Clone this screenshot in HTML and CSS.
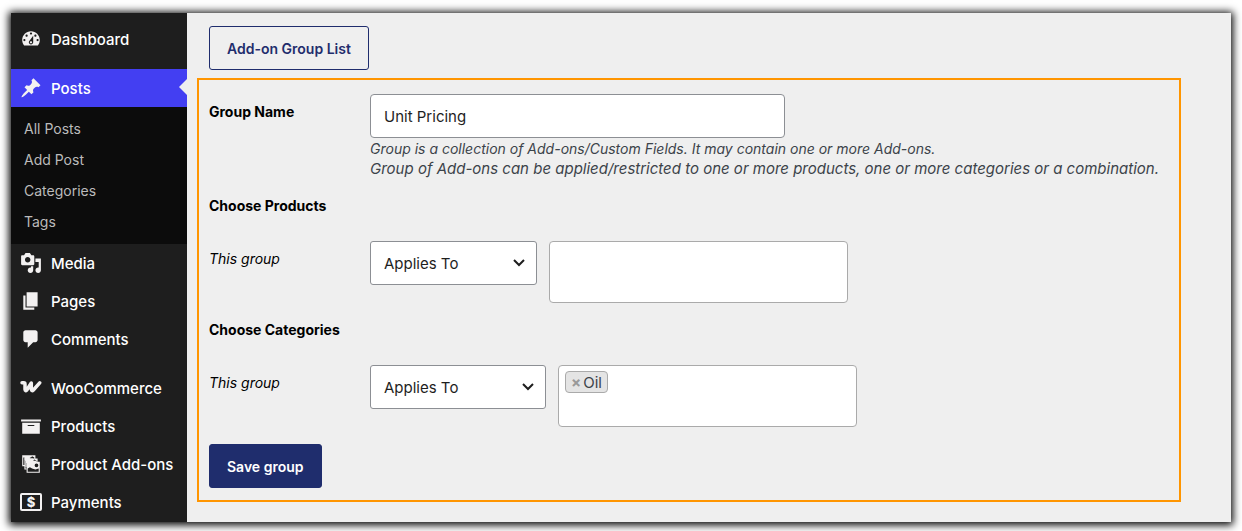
FILE: index.html
```html
<!DOCTYPE html>
<html lang="en">
<head>
  <meta charset="UTF-8">
  <meta name="viewport" content="width=device-width, initial-scale=1">
  <title>Edit Add-on Group</title>
  <link rel="stylesheet" href="styles.css">
</head>
<body>
<div class="admin">
  <nav class="sidebar">
    <ul class="menu">
      <li>
        <a href="#" class="menu-link">
          <svg class="icon" viewBox="0 0 20 20"><path d="M3.76 16h12.48c1.1-1.37 1.76-3.11 1.76-5 0-4.42-3.58-8-8-8s-8 3.58-8 8c0 1.89.66 3.63 1.76 5zM10 4c.55 0 1 .45 1 1s-.45 1-1 1-1-.45-1-1 .45-1 1-1zM6 6c.55 0 1 .45 1 1s-.45 1-1 1-1-.45-1-1 .45-1 1-1zm8 0c.55 0 1 .45 1 1s-.45 1-1 1-1-.45-1-1 .45-1 1-1zm-5.37 5.55L12 7v6c0 1.1-.9 2-2 2s-2-.9-2-2c0-.57.24-1.08.63-1.45zM4 10c.55 0 1 .45 1 1s-.45 1-1 1-1-.45-1-1 .45-1 1-1zm12 0c.55 0 1 .45 1 1s-.45 1-1 1-1-.45-1-1 .45-1 1-1zm-5 3c0-.55-.45-1-1-1s-1 .45-1 1 .45 1 1 1 1-.45 1-1z"/></svg>
          Dashboard
        </a>
      </li>
      <li class="separator"></li>
      <li>
        <a href="#" class="menu-link current">
          <svg class="icon" viewBox="0 0 20 20"><path d="M10.44 3.02l1.82-1.82 6.36 6.35-1.83 1.82c-1.05-.68-2.48-.57-3.41.36l-.75.75c-.92.93-1.04 2.35-.35 3.41l-1.83 1.82-2.41-2.41-2.8 2.79c-.42.42-3.38 2.71-3.8 2.29s1.86-3.39 2.28-3.81l2.79-2.79L4.1 9.36l1.83-1.82c1.05.69 2.48.57 3.4-.36l.75-.75c.93-.92 1.05-2.35.36-3.41z"/></svg>
          Posts
        </a>
        <ul class="submenu">
          <li><a href="#">All Posts</a></li>
          <li><a href="#">Add Post</a></li>
          <li><a href="#">Categories</a></li>
          <li><a href="#">Tags</a></li>
        </ul>
      </li>
      <li>
        <a href="#" class="menu-link">
          <svg class="icon" viewBox="0 0 20 20"><path d="M13 11V4c0-.55-.45-1-1-1h-1.67L9 1H5L3.67 3H2c-.55 0-1 .45-1 1v7c0 .55.45 1 1 1h10c.55 0 1-.45 1-1zM7 4.5c1.38 0 2.5 1.12 2.5 2.5S8.38 9.5 7 9.5 4.5 8.38 4.5 7 5.62 4.5 7 4.5zM14 6h5v10.5c0 1.38-1.12 2.5-2.5 2.5S14 17.88 14 16.5s1.12-2.5 2.5-2.5c.17 0 .34.02.5.05V9h-3V6zm-4 8.05V13h2v3.5c0 1.38-1.12 2.5-2.5 2.5S7 17.88 7 16.5 8.12 14 9.5 14c.17 0 .34.02.5.05z"/></svg>
          Media
        </a>
      </li>
      <li>
        <a href="#" class="menu-link">
          <svg class="icon" viewBox="0 0 20 20"><path d="M6 15V2h10v13H6zm-1 1h8v2H3V5h2v11z"/></svg>
          Pages
        </a>
      </li>
      <li>
        <a href="#" class="menu-link">
          <svg class="icon" viewBox="0 0 20 20"><path d="M5 2h9c1.1 0 2 .9 2 2v7c0 1.1-.9 2-2 2h-2l-5 5v-5H5c-1.1 0-2-.9-2-2V4c0-1.1.9-2 2-2z"/></svg>
          Comments
        </a>
      </li>
      <li class="separator"></li>
      <li>
        <a href="#" class="menu-link">
          <svg class="icon" viewBox="0 0 22 22"><path class="woo" d="M2 5.700H3.700Q5 5.700 5 7.200V12.400Q5.200 14.700 6.800 13L11.300 6V12.400Q11.800 14.600 13.400 13L19.700 5.900"/></svg>
          WooCommerce
        </a>
      </li>
      <li>
        <a href="#" class="menu-link">
          <svg class="icon" viewBox="0 0 20 20"><path d="M19 4v2H1V4h18zM2 7h16v10H2V7zm11 3V9H7v1h6z"/></svg>
          Products
        </a>
      </li>
      <li>
        <a href="#" class="menu-link">
          <svg class="icon" viewBox="0 0 20 20">
            <path d="M2 2h12v3h-1V4l-2-1-1 1H3v7h1v1H2V2zM4 5h12v3h-1V7l-2-1-1 1H5v7h1v1H4V5z"/>
            <path d="M4 3h5v2h3v2h3v2H6v4H5V6H4V3z"/>
            <path fill-rule="evenodd" d="M6 8h12v10H6V8zm1 6v3h10v-3l-3 1-3-1-2-1-2 1zm8-4.500a1.700 1.700 0 1 0 0 3.400 1.700 1.700 0 0 0 0-3.400z"/>
          </svg>
          Product Add-ons
        </a>
      </li>
      <li>
        <a href="#" class="menu-link">
          <svg class="icon" viewBox="0 0 22 22"><rect class="bill" x="1" y="3" width="20" height="16" rx="1"/><text class="bill-sign" x="11" y="16">$</text></svg>
          Payments
        </a>
      </li>
    </ul>
  </nav>

  <main class="content">
    <a href="#" class="btn btn-outline">Add-on Group List</a>

    <form class="group-form">
      <div class="row">
        <label class="row-title" for="group-name">Group Name</label>
        <div class="field">
          <input type="text" id="group-name" class="text-input" value="Unit Pricing">
          <p class="hint">Group is a collection of Add-ons/Custom Fields. It may contain one or more Add-ons.</p>
          <p class="hint hint-large">Group of Add-ons can be applied/restricted to one or more products, one or more categories or a combination.</p>
        </div>
      </div>

      <h2 class="section-title">Choose Products</h2>
      <div class="row">
        <label class="row-label" for="products-rule">This group</label>
        <div class="field field-inline">
          <select id="products-rule" class="select">
            <option>Applies To</option>
            <option>Excludes</option>
          </select>
          <div class="tag-box">
            <input type="text" class="tag-input" aria-label="Products">
          </div>
        </div>
      </div>

      <h2 class="section-title">Choose Categories</h2>
      <div class="row">
        <label class="row-label" for="categories-rule">This group</label>
        <div class="field field-inline">
          <select id="categories-rule" class="select select-wide">
            <option>Applies To</option>
            <option>Excludes</option>
          </select>
          <div class="tag-box">
            <span class="tag"><button type="button" class="tag-remove" aria-label="Remove Oil">×</button>Oil</span>
            <input type="text" class="tag-input" aria-label="Categories">
          </div>
        </div>
      </div>

      <button type="submit" class="btn btn-primary">Save group</button>
    </form>
  </main>
</div>
</body>
</html>
```
FILE: styles.css
```css
* {
  box-sizing: border-box;
}

body {
  margin: 0;
  padding: 13px 11px 9px;
  font-family: Inter, "Liberation Sans", sans-serif;
  font-size: 15px;
  background-color: white;
  color: #000;
}

.admin {
  display: flex;
  background-color: #efefef;
  box-shadow: 0 1px 8px 2px #000;
}

/* Sidebar */
.sidebar {
  flex: 0 0 176px;
  background-color: #1e1e1e;
}

.menu,
.submenu {
  list-style: none;
  margin: 0;
  padding: 0;
}

.menu {
  padding-top: 7px;
}

.separator {
  height: 11px;
}

.menu-link {
  position: relative;
  display: flex;
  align-items: center;
  gap: 9px;
  height: 38px;
  padding-left: 9px;
  font-weight: 500;
  color: white;
  text-decoration: none;
}

.menu-link.current {
  background-color: #433ff2;
}

.menu-link.current::after {
  content: "";
  position: absolute;
  right: 0;
  top: 10px;
  border: 8px solid transparent;
  border-left: none;
  border-right-color: #efefef;
}

.icon {
  width: 22px;
  height: 22px;
  flex: none;
  fill: #f3f1f1;
}

.woo {
  fill: none;
  stroke: #f3f1f1;
  stroke-width: 3.5;
  stroke-linecap: round;
  stroke-linejoin: round;
}

.bill {
  fill: none;
  stroke: #f3f1f1;
  stroke-width: 2;
}

.bill-sign {
  font-size: 13px;
  font-weight: 800;
  text-anchor: middle;
}

.submenu {
  padding: 6px 0 7px;
  background-color: #0c0c0c;
}

.submenu a {
  display: block;
  padding-left: 13px;
  font-size: 14px;
  line-height: 31px;
  color: #bbb;
  text-decoration: none;
}

/* Content */
.content {
  flex: 1;
  min-width: 0;
  padding: 13px 50px 20px 10px;
}

.btn {
  display: inline-flex;
  align-items: center;
  height: 44px;
  padding: 0 17px;
  border: 1px solid #1f2d6d;
  border-radius: 3px;
  font-family: inherit;
  font-size: 14px;
  text-decoration: none;
  cursor: pointer;
}

.btn-outline {
  margin-left: 12px;
  font-weight: 600;
  color: #1f2d6d;
}

.btn-primary {
  margin-top: 17px;
  background-color: #1f2d6d;
  font-weight: 600;
  color: white;
}

.group-form {
  margin-top: 8px;
  padding: 14px 10px 12px;
  border: 2px solid #ff9500;
}

.row {
  display: flex;
}

.row-title,
.row-label {
  flex: 0 0 161px;
  padding-top: 8px;
  font-size: 14px;
  line-height: 20px;
}

.row-title,
.section-title {
  font-weight: 700;
}

.row-label {
  font-style: italic;
}

.section-title {
  margin: 17px 0 25px;
  font-size: 14px;
  line-height: 20px;
}

.field {
  flex: 1;
  min-width: 0;
}

.field-inline {
  display: flex;
  gap: 12px;
}

.text-input {
  display: block;
  width: 415px;
  max-width: 100%;
  height: 44px;
  padding: 0 13px;
  border: 1px solid #8c8f94;
  border-radius: 4px;
  background-color: white;
  font: inherit;
  color: #1e1e1e;
}

.hint {
  margin: 0;
  font-size: 14px;
  font-style: italic;
  line-height: 21px;
  color: #3c434a;
}

.hint-large {
  font-size: 15px;
  line-height: 20px;
}

.select {
  appearance: none;
  width: 167px;
  height: 44px;
  padding: 0 13px;
  border: 1px solid #8c8f94;
  border-radius: 3px;
  background: white url("data:image/svg+xml,%3Csvg xmlns='http://www.w3.org/2000/svg' viewBox='0 0 12 8'%3E%3Cpath d='M1 1l5 5 5-5' fill='none' stroke='%231e1e1e' stroke-width='2'/%3E%3C/svg%3E") no-repeat right 11px center / 12px 8px;
  font: inherit;
  color: #1e1e1e;
}

.select-wide {
  width: 176px;
}

.tag-box {
  display: flex;
  align-items: flex-start;
  width: 299px;
  height: 62px;
  padding: 5px 6px;
  border: 1px solid #aaa;
  border-radius: 4px;
  background-color: white;
}

.tag {
  display: flex;
  align-items: center;
  height: 22px;
  padding: 0 5px;
  border: 1px solid #aaa;
  border-radius: 4px;
  background-color: #e4e4e4;
  color: #3c434a;
}

.tag-remove {
  padding: 0;
  margin-right: 2px;
  border: none;
  background: none;
  font: inherit;
  font-weight: 700;
  color: #999;
  cursor: pointer;
}

.tag-input {
  flex: 1;
  min-width: 0;
  height: 22px;
  padding: 0;
  border: none;
  outline: none;
  background: none;
  font: inherit;
}
```
